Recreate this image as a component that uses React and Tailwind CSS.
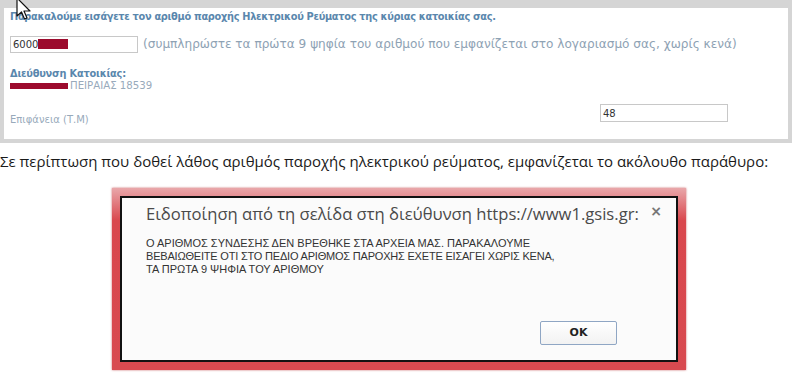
export default function App() {
  return (
    <div className="relative w-[800px] h-[373px] bg-white overflow-hidden">
      {/* top panel */}
      <div className="w-[792px] bg-[#d5d5d5] pt-[8px] pl-[4px] pr-[4px] pb-[4px]">
        <div className="bg-white h-[131px] pl-[6px] pt-[2px] flex flex-col">
          <div className="font-['DejaVu_Sans',sans-serif] font-bold text-[9.8px] tracking-[-0.3px] leading-[13px] text-[#5a87ad] whitespace-nowrap">
            Παρακαλούμε εισάγετε τον αριθμό παροχής Ηλεκτρικού Ρεύματος της κύριας κατοικίας σας.
          </div>
          <div className="flex items-center mt-[12px]">
            <div className="w-[128px] h-[17px] border border-[#c8c8c8] flex items-center pl-[2px] font-['DejaVu_Sans',sans-serif] text-[10px] text-[#333]">
              <span>6000</span>
              <span className="inline-block w-[30px] h-[10px] bg-[#9c0b2d]"></span>
            </div>
            <span className="ml-[5px] font-['DejaVu_Sans',sans-serif] text-[12.1px] text-[#8ea2b4] whitespace-nowrap">
              (συμπληρώστε τα πρώτα 9 ψηφία του αριθμού που εμφανίζεται στο λογαριασμό σας, χωρίς κενά)
            </span>
          </div>
          <div className="mt-[15px] font-['DejaVu_Sans',sans-serif] font-bold text-[9.8px] tracking-[-0.2px] leading-[11px] text-[#5a87ad] whitespace-nowrap">
            Διεύθυνση Κατοικίας:
          </div>
          <div className="flex items-center h-[13px] font-['DejaVu_Sans',sans-serif] text-[10.2px] text-[#98aabb] whitespace-nowrap">
            <span className="inline-block w-[58px] h-[6px] bg-[#9c0b2d] mr-[2px]"></span>
            <span>ΠΕΙΡΑΙΑΣ 18539</span>
          </div>
          <div className="flex items-end mt-[12px]">
            <span className="font-['DejaVu_Sans',sans-serif] text-[10px] leading-[12px] text-[#98aabb] w-[590px] whitespace-nowrap mb-[-4px]">Επιφάνεια (Τ.Μ)</span>
            <div className="w-[128px] h-[18px] border border-[#c8c8c8] flex items-center pl-[2px] font-['DejaVu_Sans',sans-serif] text-[10px] text-[#333]">
              48
            </div>
          </div>
        </div>
      </div>

      <div className="mt-[8px] font-['Open_Sans',sans-serif] text-[15px] leading-[20px] text-[#1a1a1a] whitespace-nowrap">
        Σε περίπτωση που δοθεί λάθος αριθμός παροχής ηλεκτρικού ρεύματος, εμφανίζεται το ακόλουθο παράθυρο:
      </div>

      {/* dialog */}
      <div className="mt-[17px] ml-[112px] w-[574px] h-[182px] p-[8px] bg-[linear-gradient(to_bottom,#e9a7aa_0%,#d9474d_18%,#d84a50_100%)] shadow-[0_0_2px_#c9666a]">
        <div className="h-full border-[2px] border-[#111] bg-[#fbfbfb] flex flex-col pl-[24px] pr-[14px] pt-[5px]">
          <div className="flex items-start justify-between">
            <span className="font-['Open_Sans',sans-serif] text-[16.6px] leading-[22px] text-[#4a4a4a] whitespace-nowrap">
              Ειδοποίηση από τη σελίδα στη διεύθυνση https://www1.gsis.gr:
            </span>
            <span className="text-[#777] text-[14px] leading-[14px] font-bold font-['DejaVu_Sans',sans-serif] mt-[1px]">×</span>
          </div>
          <div className="mt-[12px] font-['Liberation_Sans',sans-serif] text-[11px] leading-[13px] text-[#333] whitespace-nowrap">
            <div>Ο ΑΡΙΘΜΟΣ ΣΥΝΔΕΣΗΣ ΔΕΝ ΒΡΕΘΗΚΕ ΣΤΑ ΑΡΧΕΙΑ ΜΑΣ. ΠΑΡΑΚΑΛΟΥΜΕ</div>
            <div className="tracking-[-0.2px]">ΒΕΒΑΙΩΘΕΙΤΕ ΟΤΙ ΣΤΟ ΠΕΔΙΟ ΑΡΙΘΜΟΣ ΠΑΡΟΧΗΣ ΕΧΕΤΕ ΕΙΣΑΓΕΙ ΧΩΡΙΣ ΚΕΝΑ,</div>
            <div>ΤΑ ΠΡΩΤΑ 9 ΨΗΦΙΑ ΤΟΥ ΑΡΙΘΜΟΥ</div>
          </div>
          <div className="flex justify-end mt-[45px] pr-[45px]">
            <div className="w-[77px] h-[24px] border border-[#8fa6c4] rounded-[2px] bg-[linear-gradient(to_bottom,#ffffff,#f2f2f2)] flex items-center justify-center font-['DejaVu_Sans',sans-serif] font-bold text-[11px] text-[#222]">
              OK
            </div>
          </div>
        </div>
      </div>

      {/* mouse cursor overlay */}
      <svg className="absolute left-[16px] top-[-3px]" width="16" height="26" viewBox="0 0 16 26">
        <path d="M1 1 L1 19 L5.5 15 L8.5 22 L11 21 L8 14 L14 14 Z" fill="white" stroke="#111" strokeWidth="1.2" strokeLinejoin="round" />
      </svg>
    </div>
  );
}
